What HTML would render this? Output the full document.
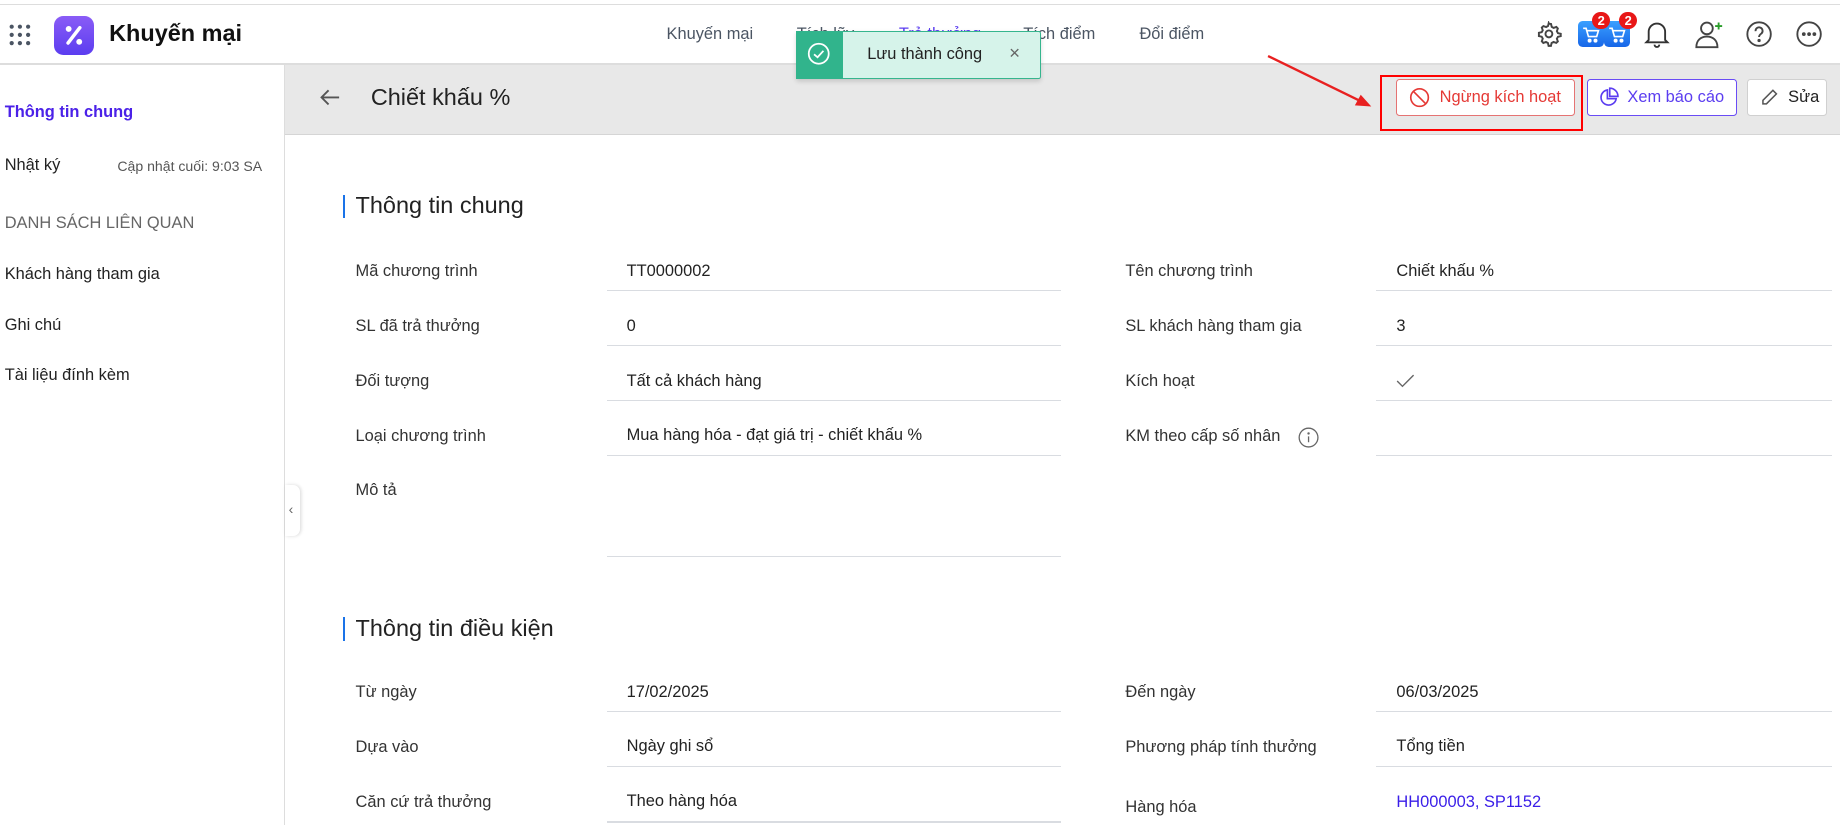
<!DOCTYPE html>
<html><head><meta charset="utf-8"><style>
html,body{margin:0;padding:0;width:1840px;height:825px;overflow:hidden;background:#fff}
#w{zoom:1.17347;width:1568px;height:703px;position:relative;font-family:"Liberation Sans",sans-serif;color:#222;font-size:14px}
.a{position:absolute;white-space:nowrap}
.lbl{color:#333;font-size:14px}
.val{color:#222;font-size:14px}
.ul{position:absolute;height:1px;background:#d9dce1}
.nav{color:#4b5563;font-size:14px;top:21px}
.side{left:4px;font-size:14px;color:#222}
.btn{position:absolute;top:67px;height:32px;box-sizing:border-box;border-radius:3px;display:flex;align-items:center;font-size:14px;background:#fff}
.t{z-index:10}
</style></head><body><div id="w">
<div class="a" style="left:0;top:3px;width:1568px;height:1px;background:#ddd"></div>
<div class="a" style="left:0;top:54px;width:1568px;height:1px;background:#ddd"></div>
<svg class="a" style="left:6px;top:19px" width="22" height="22" viewBox="0 0 22 22" fill="#4b5563"><circle cx="4" cy="4" r="1.8"/><circle cx="11" cy="4" r="1.8"/><circle cx="18" cy="4" r="1.8"/><circle cx="4" cy="11" r="1.8"/><circle cx="11" cy="11" r="1.8"/><circle cx="18" cy="11" r="1.8"/><circle cx="4" cy="18" r="1.8"/><circle cx="11" cy="18" r="1.8"/><circle cx="18" cy="18" r="1.8"/></svg>
<div class="a" style="left:46px;top:14px;width:34px;height:33px;border-radius:8px;background:linear-gradient(180deg,#8a5cf6,#5b3df0)"></div>
<svg class="a" style="left:46px;top:14px" width="34" height="33" viewBox="0 0 34 33"><line x1="22" y1="10" x2="12" y2="23" stroke="#fff" stroke-width="3" stroke-linecap="round"/><circle cx="12.5" cy="11" r="2.5" fill="#fff"/><circle cx="21.5" cy="22" r="2.5" fill="#fff"/></svg>
<div class="a" style="left:93px;top:17px;font-size:20px;font-weight:bold;color:#111">Khuyến mại</div>
<div class="a nav" style="left:568px">Khuyến mại</div>
<div class="a nav" style="left:679px">Tích lũy</div>
<div class="a nav" style="left:766px;color:#5b3df0">Trả thưởng</div>
<div class="a nav" style="left:872px">Tích điểm</div>
<div class="a nav" style="left:971px">Đổi điểm</div>
<!-- toast -->
<div class="a t" style="left:678px;top:26px;width:209px;height:41px;background:#d6f3ea;border:1px solid #36b58e;box-sizing:border-box;border-radius:2px;box-shadow:0 2px 4px rgba(0,0,0,.15)"></div>
<div class="a t" style="left:678px;top:26px;width:40px;height:41px;background:#31b48c"></div>
<svg class="a t" style="left:688px;top:36px" width="20" height="20" viewBox="0 0 20 20" fill="none" stroke="#fff" stroke-width="1.5"><circle cx="10" cy="10" r="8.5"/><path d="M6 10.5l3 2.5 5-5.5"/></svg>
<div class="a t" style="left:739px;top:38px;font-size:14px;color:#222">Lưu thành công</div>
<div class="a t" style="left:860px;top:36px;font-size:16px;color:#666">×</div>
<!-- right icons -->
<svg class="a" style="left:1309px;top:18px" width="22" height="22" viewBox="0 0 24 24" fill="none" stroke="#444" stroke-width="1.8"><circle cx="12" cy="12" r="3.2"/><path d="M12 2.5l2 .3.6 2.6 1.8 1 2.5-.9 1.4 1.5-.9 2.5 1 1.8 2.6.6v2.2l-2.6.6-1 1.8.9 2.5-1.5 1.4-2.5-.9-1.8 1-.6 2.6h-2.2l-.6-2.6-1.8-1-2.5.9-1.4-1.5.9-2.5-1-1.8-2.6-.6V11l2.6-.6 1-1.8-.9-2.5 1.5-1.4 2.5.9 1.8-1 .6-2.6z"/></svg>
<div class="a" style="left:1345px;top:18px;width:22px;height:22px;border-radius:4px;background:linear-gradient(#3aa0ff,#1766e8)"></div>
<div class="a" style="left:1367px;top:18px;width:22px;height:22px;border-radius:4px;background:linear-gradient(#3aa0ff,#1766e8)"></div>
<svg class="a" style="left:1348px;top:22px" width="16" height="15" viewBox="0 0 16 15" fill="none" stroke="#fff" stroke-width="1.4"><path d="M1 2h2.5l2 7h7l1.5-5H4.5"/><circle cx="6.5" cy="12.5" r="1" fill="#fff"/><circle cx="11.5" cy="12.5" r="1" fill="#fff"/></svg>
<svg class="a" style="left:1370px;top:22px" width="16" height="15" viewBox="0 0 16 15" fill="none" stroke="#fff" stroke-width="1.4"><path d="M1 2h2.5l2 7h7l1.5-5H4.5"/><circle cx="6.5" cy="12.5" r="1" fill="#fff"/><circle cx="11.5" cy="12.5" r="1" fill="#fff"/></svg>
<div class="a" style="left:1357px;top:10px;width:15px;height:15px;border-radius:50%;background:#e81717;color:#fff;font-size:11px;font-weight:bold;text-align:center;line-height:15px">2</div>
<div class="a" style="left:1380px;top:10px;width:15px;height:15px;border-radius:50%;background:#e81717;color:#fff;font-size:11px;font-weight:bold;text-align:center;line-height:15px">2</div>
<svg class="a" style="left:1401px;top:17px" width="22" height="24" viewBox="0 0 22 24" fill="none" stroke="#333" stroke-width="1.6"><path d="M4 17V10a7 7 0 0114 0v7l2 2H2z"/><path d="M9 21a2 2 0 004 0"/></svg>
<svg class="a" style="left:1444px;top:16px" width="26" height="26" viewBox="0 0 26 26" fill="none" stroke="#444" stroke-width="1.6"><circle cx="11" cy="8" r="5"/><path d="M2 24c0-6 4-9 9-9s9 3 9 9z"/><path d="M21 3v6M18 6h6" stroke="#2a9d2a"/></svg>
<svg class="a" style="left:1487px;top:17px" width="24" height="24" viewBox="0 0 24 24" fill="none" stroke="#444" stroke-width="1.6"><circle cx="12" cy="12" r="10"/><path d="M9 9.5a3 3 0 115 2c-1.5 1-2 1.6-2 3"/><circle cx="12" cy="17.5" r=".6" fill="#444"/></svg>
<svg class="a" style="left:1530px;top:17px" width="24" height="24" viewBox="0 0 24 24" fill="none" stroke="#444" stroke-width="1.6"><circle cx="12" cy="12" r="10"/><circle cx="7.5" cy="12" r=".8" fill="#444"/><circle cx="12" cy="12" r=".8" fill="#444"/><circle cx="16.5" cy="12" r=".8" fill="#444"/></svg>
<!-- sidebar -->
<div class="a" style="left:242px;top:55px;width:1px;height:648px;background:#ddd"></div>
<div class="a side" style="top:88px;color:#4b21e8;font-weight:bold">Thông tin chung</div>
<div class="a side" style="top:133px">Nhật ký</div>
<div class="a" style="left:100px;top:135px;font-size:12px;color:#555">Cập nhật cuối: 9:03 SA</div>
<div class="a side" style="top:182px;color:#666">DANH SÁCH LIÊN QUAN</div>
<div class="a side" style="top:226px">Khách hàng tham gia</div>
<div class="a side" style="top:269px">Ghi chú</div>
<div class="a side" style="top:312px">Tài liệu đính kèm</div>
<div class="a" style="left:243px;top:413px;width:13px;height:44px;background:#fff;border-radius:0 6px 6px 0;box-shadow:1px 0 3px rgba(0,0,0,.15)"></div>
<div class="a" style="left:246px;top:427px;font-size:12px;color:#666">‹</div>
<!-- subheader -->
<div class="a" style="left:243px;top:55px;width:1325px;height:59px;background:#e8e8e8;border-bottom:1px solid #d5d5d5"></div>
<svg class="a" style="left:271px;top:75px" width="20" height="16" viewBox="0 0 20 16" fill="none" stroke="#555" stroke-width="1.6"><path d="M18 8H3M9 2L3 8l6 6"/></svg>
<div class="a" style="left:316px;top:72px;font-size:20px;color:#222">Chiết khấu %</div>
<div class="btn" style="left:1190px;width:152px;border:1px solid #e57373;color:#e53935;padding-left:10px">
<svg width="18" height="18" viewBox="0 0 18 18" fill="none" stroke="#e53935" stroke-width="1.4" style="margin-right:8px"><circle cx="9" cy="9" r="7.5"/><path d="M3.7 3.7l10.6 10.6"/></svg>Ngừng kích hoạt</div>
<div class="btn" style="left:1352px;width:128px;border:1px solid #6a4cf5;color:#5b3df0;padding-left:9px">
<svg width="18" height="18" viewBox="0 0 18 18" fill="none" stroke="#5b3df0" stroke-width="1.4" style="margin-right:7px"><path d="M8 2.5a6.5 6.5 0 107.5 7.5H8z"/><path d="M10 1v7h7a7 7 0 00-7-7z"/></svg>Xem báo cáo</div>
<div class="btn" style="left:1489px;width:68px;border:1px solid #d0d0d0;color:#222;padding-left:10px">
<svg width="16" height="16" viewBox="0 0 16 16" fill="none" stroke="#555" stroke-width="1.3" style="margin-right:8px"><path d="M11 2l3 3-8.5 8.5H2.5v-3z"/></svg>Sửa</div>
<div class="a" style="left:1176px;top:64px;width:173px;height:48px;border:2.5px solid #f00;box-sizing:border-box"></div>
<svg class="a" style="left:1075px;top:42px" width="100" height="55" viewBox="0 0 100 55"><line x1="6" y1="6" x2="88" y2="46" stroke="#e82020" stroke-width="2"/><path d="M94 49l-14-1 5-9z" fill="#e82020"/></svg>
<!-- section 1 -->
<div class="a" style="left:292px;top:166px;width:2px;height:20px;background:#1a73e8"></div>
<div class="a" style="left:303px;top:164px;font-size:20px;color:#222">Thông tin chung</div>
<div class="a lbl" style="left:303px;top:223px">Mã chương trình</div><div class="a val" style="left:534px;top:223px">TT0000002</div><div class="ul" style="left:517px;top:247px;width:387px"></div>
<div class="a lbl" style="left:303px;top:270px">SL đã trả thưởng</div><div class="a val" style="left:534px;top:270px">0</div><div class="ul" style="left:517px;top:294px;width:387px"></div>
<div class="a lbl" style="left:303px;top:317px">Đối tượng</div><div class="a val" style="left:534px;top:317px">Tất cả khách hàng</div><div class="ul" style="left:517px;top:341px;width:387px"></div>
<div class="a lbl" style="left:303px;top:364px">Loại chương trình</div><div class="a val" style="left:534px;top:363px">Mua hàng hóa - đạt giá trị - chiết khấu %</div><div class="ul" style="left:517px;top:388px;width:387px"></div>
<div class="a lbl" style="left:303px;top:410px">Mô tả</div><div class="ul" style="left:517px;top:474px;width:387px"></div>
<div class="a lbl" style="left:959px;top:223px">Tên chương trình</div><div class="a val" style="left:1190px;top:223px">Chiết khấu %</div><div class="ul" style="left:1173px;top:247px;width:388px"></div>
<div class="a lbl" style="left:959px;top:270px">SL khách hàng tham gia</div><div class="a val" style="left:1190px;top:270px">3</div><div class="ul" style="left:1173px;top:294px;width:388px"></div>
<div class="a lbl" style="left:959px;top:317px">Kích hoạt</div><svg class="a" style="left:1190px;top:319px" width="16" height="12" viewBox="0 0 16 12" fill="none" stroke="#666" stroke-width="1.2"><path d="M1 6l4.5 4.5L15 1"/></svg><div class="ul" style="left:1173px;top:341px;width:388px"></div>
<div class="a lbl" style="left:959px;top:364px">KM theo cấp số nhân</div><svg class="a" style="left:1106px;top:364px" width="18" height="18" viewBox="0 0 18 18" fill="none" stroke="#666" stroke-width="1.1"><circle cx="9" cy="9" r="8"/><path d="M9 8v5"/><circle cx="9" cy="5.5" r=".5" fill="#666"/></svg><div class="ul" style="left:1173px;top:388px;width:388px"></div>
<!-- section 2 -->
<div class="a" style="left:292px;top:526px;width:2px;height:20px;background:#1a73e8"></div>
<div class="a" style="left:303px;top:524px;font-size:20px;color:#222">Thông tin điều kiện</div>
<div class="a lbl" style="left:303px;top:582px">Từ ngày</div><div class="a val" style="left:534px;top:582px">17/02/2025</div><div class="ul" style="left:517px;top:606px;width:387px"></div>
<div class="a lbl" style="left:303px;top:629px">Dựa vào</div><div class="a val" style="left:534px;top:628px">Ngày ghi sổ</div><div class="ul" style="left:517px;top:653px;width:387px"></div>
<div class="a lbl" style="left:303px;top:676px">Căn cứ trả thưởng</div><div class="a val" style="left:534px;top:675px">Theo hàng hóa</div><div class="ul" style="left:517px;top:700px;width:387px"></div>
<div class="a lbl" style="left:959px;top:582px">Đến ngày</div><div class="a val" style="left:1190px;top:582px">06/03/2025</div><div class="ul" style="left:1173px;top:606px;width:388px"></div>
<div class="a lbl" style="left:959px;top:629px">Phương pháp tính thưởng</div><div class="a val" style="left:1190px;top:628px">Tổng tiền</div><div class="ul" style="left:1173px;top:653px;width:388px"></div>
<div class="a lbl" style="left:959px;top:680px">Hàng hóa</div><div class="a val" style="left:1190px;top:676px;color:#3a1ee8">HH000003, SP1152</div>
</div></body></html>
